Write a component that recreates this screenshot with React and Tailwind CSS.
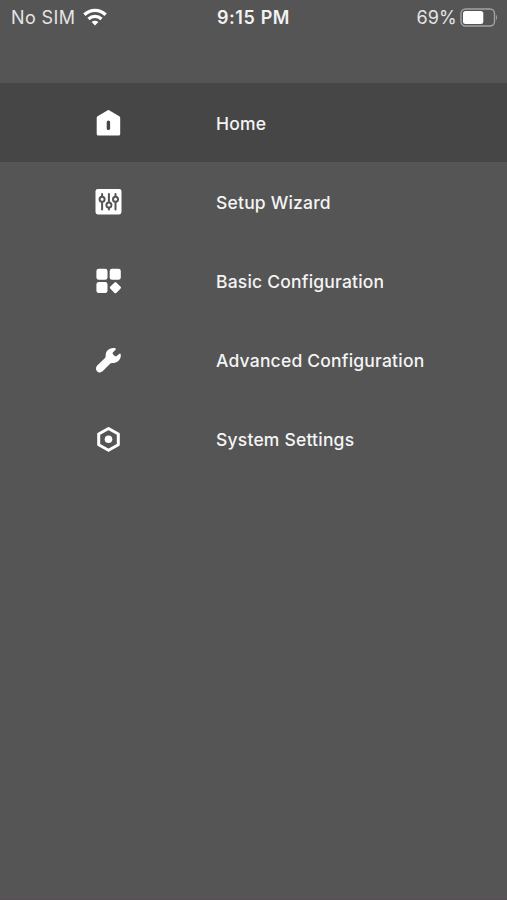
import { useState } from 'react'

function HomeIcon() {
  return (
    <svg className="w-[30px] h-[31px]" viewBox="0 0 30 31" fill="white">
      <path
        fillRule="evenodd"
        d="M14.3 3.5Q15.4 2.7 16.5 3.5L26.3 9.3Q27.2 9.9 27.2 11V27Q27.2 28.5 25.7 28.5H5.2Q3.7 28.5 3.7 27V11Q3.7 9.9 4.6 9.3ZM15.4 13.6Q13.7 13.6 13.7 15.2V21.6Q13.7 23.1 15.4 23.1Q17.1 23.1 17.1 21.6V15.2Q17.1 13.6 15.4 13.6Z"
      />
    </svg>
  )
}

function SlidersIcon() {
  return (
    <svg className="w-[30px] h-[31px]" viewBox="0 0 30 31">
      <rect x="2.5" y="3" width="26" height="25.5" rx="2.4" fill="white" />
      <g stroke="#555555" strokeWidth="2" strokeLinecap="round" fill="white">
        <path d="M9.1 8v15.5M15.9 8v15.5M22.5 8v15.5" />
        <circle cx="9.1" cy="13.2" r="2.5" />
        <circle cx="15.9" cy="18.9" r="2.5" />
        <circle cx="22.5" cy="13.2" r="2.5" />
      </g>
    </svg>
  )
}

function BlocksIcon() {
  return (
    <svg className="w-[30px] h-[31px]" viewBox="0 0 30 31" fill="white">
      <rect x="3.4" y="3.7" width="11.1" height="11.1" rx="2.4" />
      <rect x="16.7" y="3.7" width="11.1" height="11.1" rx="2.4" />
      <rect x="3.4" y="17" width="11.1" height="11.1" rx="2.4" />
      <rect x="18.1" y="18.4" width="8.6" height="8.6" rx="1.2" transform="rotate(45 22.4 22.7)" />
    </svg>
  )
}

function WrenchIcon() {
  return (
    <svg className="w-[30px] h-[31px]" viewBox="0 0 30 31" fill="white">
      <path d="M22.6 4.4C18.2 2.8 12.6 6.1 12.7 11.2Q12.8 13.1 11.8 14.2L4.2 21.6C2.4 23.4 2.8 25.9 4 27.2C5.4 28.8 7.9 28.9 9.6 27.3L16.6 20.2Q17.6 19.2 19.3 19.1C25 19.1 28.8 14.2 27.6 9.9Q27.2 9.1 26.5 9.8L23.6 12.1Q22.7 12.6 21.7 11.9L20 10.2Q19.2 9.3 19.8 8.4L22.8 5.5Q23.3 4.8 22.6 4.4Z" />
    </svg>
  )
}

function NutIcon() {
  return (
    <svg className="w-[30px] h-[31px]" viewBox="0 0 30 31">
      <path
        d="M15.5 5.5L25.3 11V21.8L15.5 27.2L5.7 21.8V11Z"
        fill="none"
        stroke="white"
        strokeWidth="3"
        strokeLinejoin="round"
      />
      <circle cx="15.5" cy="16.3" r="3.8" fill="white" />
    </svg>
  )
}

const items = [
  { label: 'Home', Icon: HomeIcon },
  { label: 'Setup Wizard', Icon: SlidersIcon },
  { label: 'Basic Configuration', Icon: BlocksIcon },
  { label: 'Advanced Configuration', Icon: WrenchIcon },
  { label: 'System Settings', Icon: NutIcon },
]

function StatusBar() {
  return (
    <header className="grid grid-cols-[1fr_auto_1fr] items-center h-[34px] pl-[11px] pr-[9px] text-lg text-[#e4e4e4]">
      <div className="flex items-center gap-2">
        <span className="pt-0.5 tracking-[0.4px]">No SIM</span>
        <svg className="w-6 h-[18px]" viewBox="0 0 24 18" fill="none" stroke="white" strokeWidth="3.4">
          <path d="M1.4 6.7C7.4 .9 16.6 .9 22.6 6.7" />
          <path d="M5.5 10.9C9.2 7.5 14.8 7.5 18.5 10.9" />
          <path d="M12 17.4L8.6 14.1Q12 11.3 15.4 14.1Z" fill="white" stroke="none" />
        </svg>
      </div>
      <span className="pt-0.5 mr-0.5 font-semibold tracking-[0.6px] text-[#f2f2f2]">9:15 PM</span>
      <div className="flex items-center justify-end gap-[3px]">
        <span className="pt-0.5 tracking-[0.2px]">69%</span>
        <svg className="w-[38px] h-[19px]" viewBox="0 0 38 19">
          <rect x="1" y="1" width="33.5" height="17" rx="4.5" fill="none" stroke="#a2a2a2" strokeWidth="1.4" />
          <rect x="3" y="3" width="20.3" height="13" rx="2.5" fill="white" />
          <path d="M36 6.5Q38 9.5 36 12.5Z" fill="#a2a2a2" />
        </svg>
      </div>
    </header>
  )
}

export default function App() {
  const [active, setActive] = useState('Home')

  return (
    <div className="min-h-screen bg-[#555555] border-b border-[#574f55] font-['Inter',sans-serif] text-white">
      <StatusBar />
      <nav className="mt-[49px] flex flex-col">
        {items.map(({ label, Icon }) => (
          <button
            key={label}
            onClick={() => setActive(label)}
            className={`flex items-center gap-[93px] h-[79px] pl-[93px] text-left ${
              active === label ? 'bg-[#464646]' : ''
            }`}
          >
            <Icon />
            <span className="pt-[3px] text-[17.5px] font-[450] tracking-[0.2px] text-[#f4f4f4]">{label}</span>
          </button>
        ))}
      </nav>
    </div>
  )
}
